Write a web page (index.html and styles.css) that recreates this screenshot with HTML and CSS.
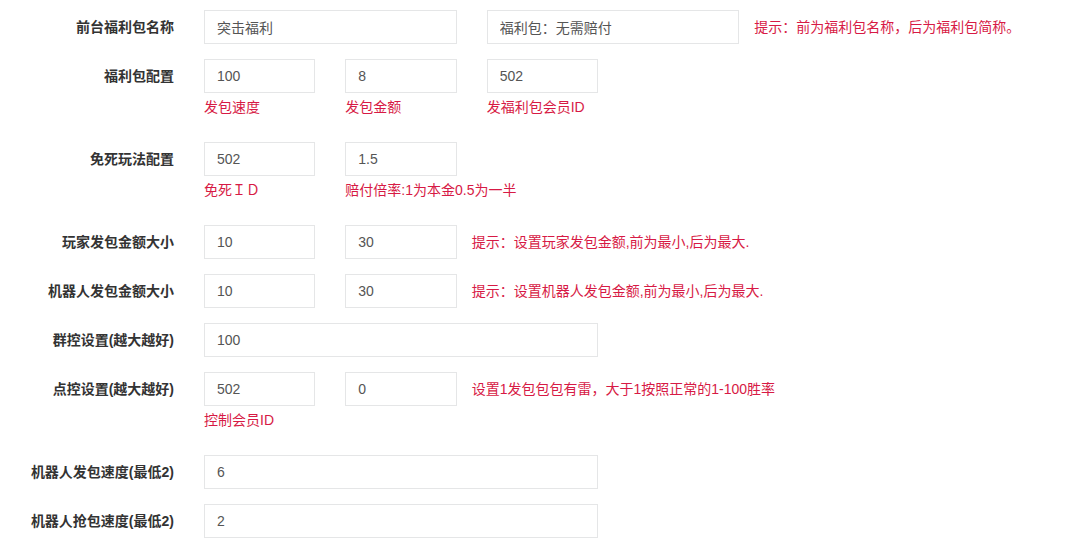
FILE: index.html
```html
<!DOCTYPE html>
<html lang="zh-CN">
<head>
<meta charset="utf-8">
<title>配置</title>
<link rel="stylesheet" href="styles.css">
</head>
<body>
<form class="form">
  <div class="row">
    <label class="label">前台福利包名称</label>
    <div class="fields">
      <div class="field w2"><input class="input" value="突击福利"></div>
      <div class="field w2"><input class="input" value="福利包：无需赔付"></div>
      <span class="hint">提示：前为福利包名称，后为福利包简称。</span>
    </div>
  </div>
  <div class="row">
    <label class="label">福利包配置</label>
    <div class="fields">
      <div class="field w1"><input class="input" value="100"><p class="help">发包速度</p></div>
      <div class="field w1"><input class="input" value="8"><p class="help">发包金额</p></div>
      <div class="field w1"><input class="input" value="502"><p class="help">发福利包会员ID</p></div>
    </div>
  </div>
  <div class="row">
    <label class="label">免死玩法配置</label>
    <div class="fields">
      <div class="field w1"><input class="input" value="502"><p class="help">免死ＩＤ</p></div>
      <div class="field w1"><input class="input" value="1.5"><p class="help nowrap">赔付倍率:1为本金0.5为一半</p></div>
    </div>
  </div>
  <div class="row">
    <label class="label">玩家发包金额大小</label>
    <div class="fields">
      <div class="field w1"><input class="input" value="10"></div>
      <div class="field w1"><input class="input" value="30"></div>
      <span class="hint">提示：设置玩家发包金额,前为最小,后为最大.</span>
    </div>
  </div>
  <div class="row">
    <label class="label">机器人发包金额大小</label>
    <div class="fields">
      <div class="field w1"><input class="input" value="10"></div>
      <div class="field w1"><input class="input" value="30"></div>
      <span class="hint">提示：设置机器人发包金额,前为最小,后为最大.</span>
    </div>
  </div>
  <div class="row">
    <label class="label">群控设置(越大越好)</label>
    <div class="fields">
      <div class="field w3"><input class="input" value="100"></div>
    </div>
  </div>
  <div class="row">
    <label class="label">点控设置(越大越好)</label>
    <div class="fields">
      <div class="field w1"><input class="input" value="502"><p class="help">控制会员ID</p></div>
      <div class="field w1"><input class="input" value="0"></div>
      <span class="hint">设置1发包包包有雷，大于1按照正常的1-100胜率</span>
    </div>
  </div>
  <div class="row">
    <label class="label">机器人发包速度(最低2)</label>
    <div class="fields">
      <div class="field w3"><input class="input" value="6"></div>
    </div>
  </div>
  <div class="row">
    <label class="label">机器人抢包速度(最低2)</label>
    <div class="fields">
      <div class="field w3"><input class="input" value="2"></div>
    </div>
  </div>
</form>
</body>
</html>
```

FILE: styles.css
```css
html, body {
  margin: 0;
  padding: 0;
  background: #ffffff;
}
body {
  font-family: "Liberation Sans", "Noto Sans CJK SC", sans-serif;
  font-size: 14px;
  color: #555555;
}
.form {
  padding-top: 10px;
  display: flex;
  flex-direction: column;
  gap: 15px;
}
.row {
  display: flex;
  align-items: flex-start;
  gap: 30px;
}
.label {
  flex: 0 0 174px;
  text-align: right;
  font-weight: bold;
  color: #333333;
  line-height: 34px;
  height: 34px;
  white-space: nowrap;
}
.fields {
  display: flex;
  align-items: flex-start;
  gap: 30px;
}
.field {
  display: flex;
  flex-direction: column;
}
.w1 { width: 111.33px; }
.w2 { width: 252.67px; }
.w3 { width: 394px; }
.input {
  box-sizing: border-box;
  width: 100%;
  height: 34px;
  border: 1px solid #e5e6e7;
  background: #ffffff;
  padding: 0 12px;
  margin: 0;
  font-family: "Liberation Sans", "Noto Sans CJK SC", sans-serif;
  font-size: 14px;
  color: #555555;
  outline: none;
}
.help {
  margin: 5px 0 10px;
  line-height: 19px;
  color: #d71a45;
  white-space: nowrap;
}
.hint {
  margin-left: -15px;
  line-height: 34px;
  color: #d71a45;
  white-space: nowrap;
}
```
